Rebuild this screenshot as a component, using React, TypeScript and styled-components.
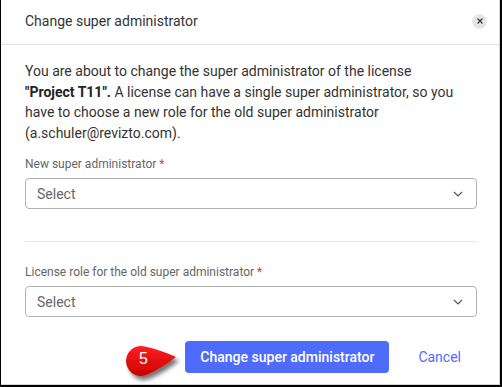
import React from "react";
import styled, { createGlobalStyle } from "styled-components";

const Global = createGlobalStyle`
  html, body { margin: 0; padding: 0; background: #fff; }
  body { font-family: Roboto, "Liberation Sans", Arial, sans-serif; }
  * { box-sizing: border-box; }
`;

const Frame = styled.div`
  position: relative;
  width: 502px;
  height: 387px;
  background: #fff;
  border-left: 1px solid #000;
  border-right: 2px solid #000;
  border-bottom: 2px solid #000;
  display: flex;
  flex-direction: column;
`;

const Dialog = styled.div`
  flex: 1;
  display: flex;
  flex-direction: column;
  border-right: 1px solid #d6d6d6;
  border-bottom: 1px solid #d6d6d6;
`;

const Header = styled.div`
  height: 45px;
  border-bottom: 1px solid #e2e2e2;
  display: flex;
  align-items: center;
  justify-content: space-between;
  padding: 0 12px 2px 24px;
`;

const Title = styled.h2`
  margin: 0;
  font-size: 14px;
  font-weight: 400;
  color: #333;
`;

const CloseButton = styled.button`
  width: 15px;
  height: 15px;
  border-radius: 50%;
  border: none;
  padding: 0;
  background: #e6e6e6;
  display: flex;
  align-items: center;
  justify-content: center;
  color: #333;
`;

const Body = styled.div`
  padding: 16px 22px 0 24px;
  display: flex;
  flex-direction: column;
`;

const Intro = styled.p`
  margin: 0;
  font-size: 14px;
  line-height: 20.5px;
  color: #333;
  b { font-weight: 700; color: #222; }
`;

const Field = styled.div<{ $top: number }>`
  margin-top: ${(p) => p.$top}px;
  display: flex;
  flex-direction: column;
`;

const Label = styled.label`
  font-size: 12px;
  line-height: 16px;
  color: #666;
  margin-bottom: 6px;
  span { color: #e53935; }
`;

const SelectBox = styled.div`
  height: 31px;
  border: 1px solid #b3b3b3;
  border-radius: 4px;
  display: flex;
  align-items: center;
  justify-content: space-between;
  padding: 0 13px 0 11px;
  font-size: 14px;
  color: #666;
`;

const Divider = styled.hr`
  margin: 32px 0 0;
  border: none;
  border-top: 1px solid #e6e6e6;
`;

const Footer = styled.div`
  margin-top: 24px;
  display: flex;
  justify-content: flex-end;
  align-items: center;
  gap: 13px;
`;

const PrimaryButton = styled.button`
  height: 32px;
  width: 204px;
  border: none;
  border-radius: 4px;
  background: #4f6bfc;
  color: #fff;
  font-family: Roboto, "Liberation Sans", Arial, sans-serif;
  font-size: 14px;
  font-weight: 500;
`;

const TextButton = styled.button`
  height: 32px;
  padding: 0 16px;
  border: none;
  background: transparent;
  color: #4f6bfc;
  font-family: Roboto, "Liberation Sans", Arial, sans-serif;
  font-size: 14px;
`;

const Callout = styled.svg`
  position: absolute;
  left: 111px;
  top: 338px;
  overflow: visible;
`;

const Chevron = () => (
  <svg width="10" height="6" viewBox="0 0 10 6">
    <polyline points="1,1 5,5 9,1" fill="none" stroke="#555" strokeWidth="1.2" />
  </svg>
);

export default function App() {
  return (
    <>
      <Global />
      <Frame>
        <Dialog>
          <Header>
            <Title>Change super administrator</Title>
            <CloseButton aria-label="Close">
              <svg width="6" height="6" viewBox="0 0 6 6">
                <path d="M0.5 0.5 L5.5 5.5 M5.5 0.5 L0.5 5.5" stroke="#333" strokeWidth="1.2" />
              </svg>
            </CloseButton>
          </Header>
          <Body>
            <Intro>
              You are about to change the super administrator of the license
              <br />
              <b>"Project T11".</b> A license can have a single super administrator, so you have to
              choose a new role for the old super administrator (a.schuler@revizto.com).
            </Intro>
            <Field $top={13}>
              <Label>
                New super administrator <span>*</span>
              </Label>
              <SelectBox>
                Select
                <Chevron />
              </SelectBox>
            </Field>
            <Divider />
            <Field $top={22}>
              <Label>
                License role for the old super administrator <span>*</span>
              </Label>
              <SelectBox>
                Select
                <Chevron />
              </SelectBox>
            </Field>
            <Footer>
              <PrimaryButton>Change super administrator</PrimaryButton>
              <TextButton>Cancel</TextButton>
            </Footer>
          </Body>
        </Dialog>
        <Callout width="75" height="45" viewBox="0 0 75 45">
          <defs>
            <linearGradient id="red" x1="0" y1="0" x2="0" y2="1">
              <stop offset="0" stopColor="#ff2020" />
              <stop offset="1" stopColor="#c80000" />
            </linearGradient>
            <filter id="sh" x="-30%" y="-30%" width="170%" height="180%">
              <feDropShadow dx="3" dy="4" stdDeviation="2" floodColor="#000" floodOpacity="0.55" />
            </filter>
          </defs>
          <path
            d="M 33.8 8.8 Q 48 12 64 19 Q 50 30 36.9 35.8 A 15 15 0 1 1 33.8 8.8 Z"
            fill="url(#red)"
            filter="url(#sh)"
          />
          <text
            x="31.5"
            y="25.5"
            textAnchor="middle"
            fill="#fff"
            fontFamily="'Liberation Sans', Arial, sans-serif"
            fontSize="16"
          >
            5
          </text>
        </Callout>
      </Frame>
    </>
  );
}
